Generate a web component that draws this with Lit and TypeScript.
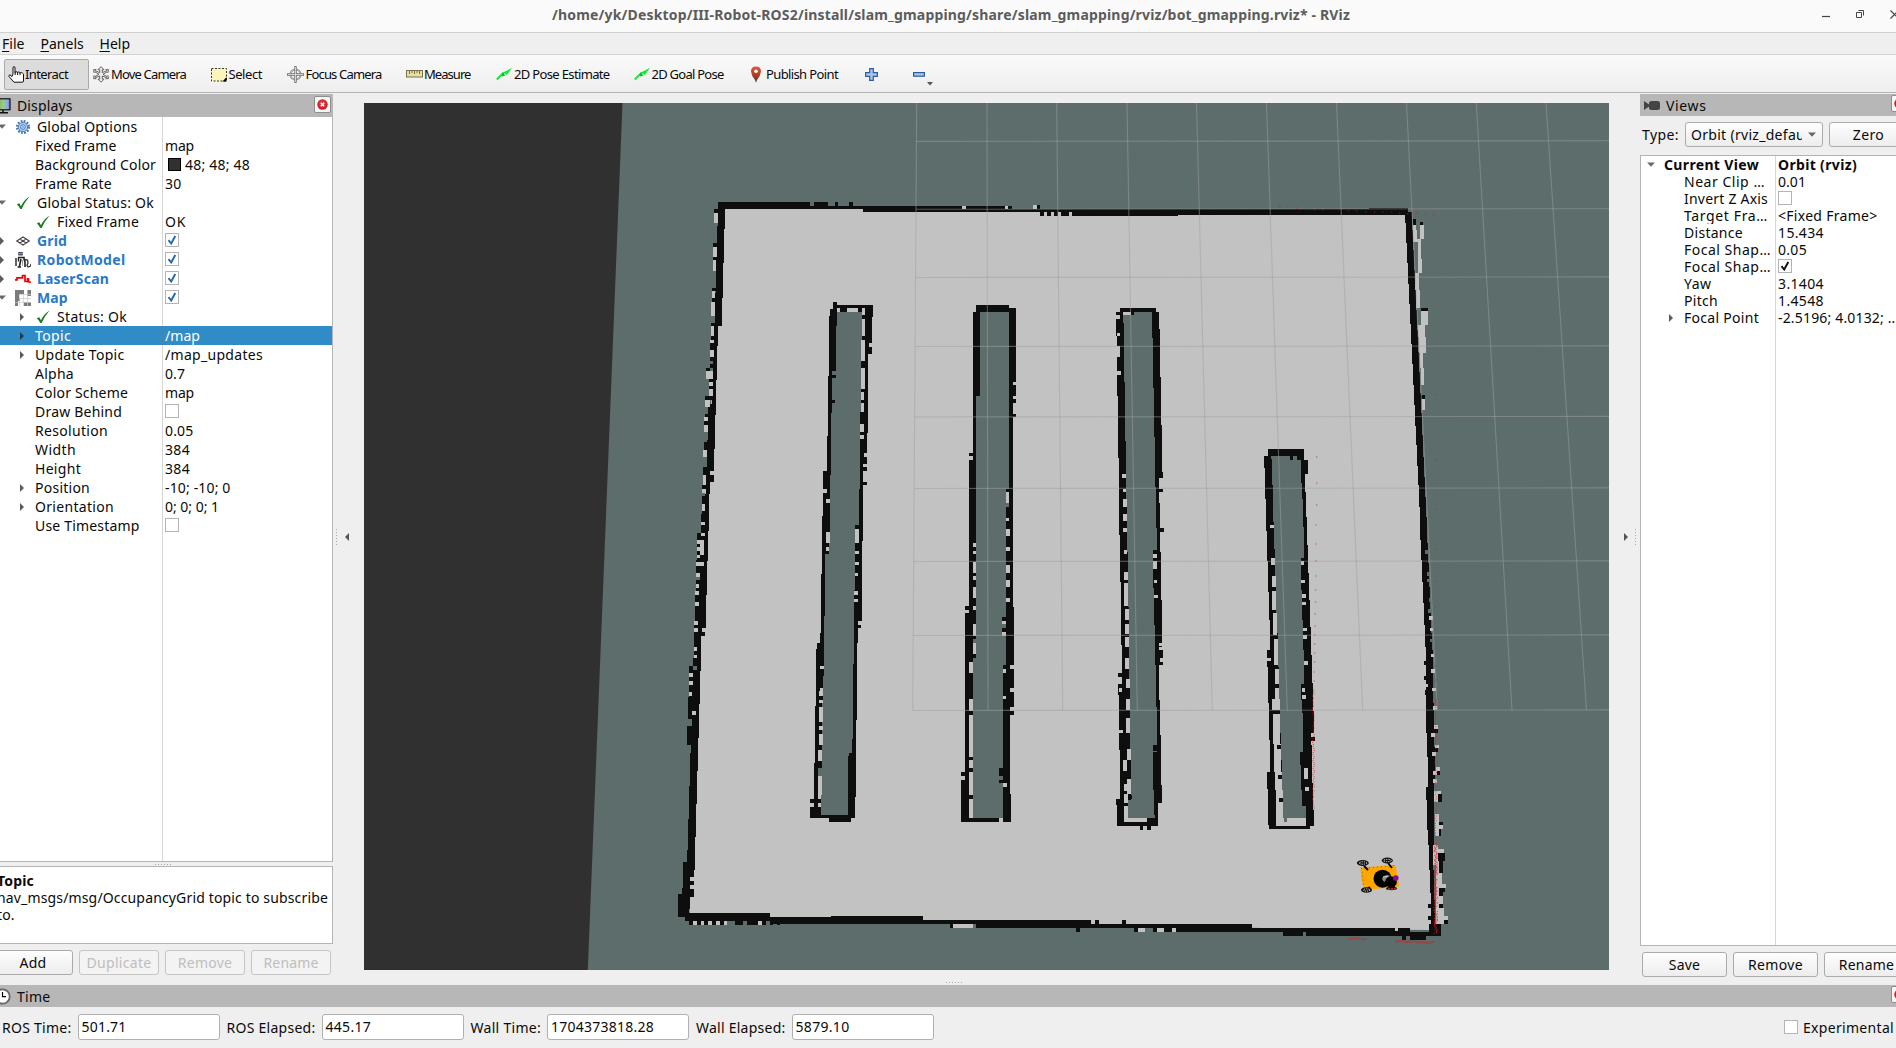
import { LitElement, html, svg, css, nothing, type TemplateResult } from "lit";
import { customElement, property } from "lit/decorators.js";
import { classMap } from "lit/directives/class-map.js";

/* ---------- text label that spreads its letters over a given width ---------- */
@customElement("fit-text")
export class FitText extends LitElement {
  static styles = css`
    :host { display: inline-block; white-space: pre; }
  `;
  @property() text = "";
  @property({ type: Number }) w = 0;
  render() {
    return html`<span>${this.text}</span>`;
  }
  updated() {
    if (!this.w) return;
    const span = this.renderRoot.querySelector("span") as HTMLElement;
    this.style.letterSpacing = "0px";
    const natural = span.getBoundingClientRect().width;
    this.style.letterSpacing = `${(this.w - natural) / this.text.length}px`;
  }
}
const t = (text: string, w = 0) => html`<fit-text .text=${text} .w=${w}></fit-text>`;

/* ---------- icons ---------- */
const closeIcon = svg`<svg width="11" height="11" viewBox="0 0 11 11"><circle cx="5.5" cy="5.5" r="5.2" fill="#c81e26"/><circle cx="5.5" cy="4.6" r="3.8" fill="#e0444a" opacity=".6"/><path d="M3.8 3.8l3.4 3.4M7.2 3.8L3.8 7.2" stroke="#fff" stroke-width="1.5"/></svg>`;
const handIcon = svg`<svg width="17" height="17" viewBox="0 0 17 17"><path d="M5 8V1.8Q5 .6 6 .6T7 1.800V6.500Q7 5.600 8.200 5.600T9.400 6.800Q9.500 6 10.700 6T12 7.200Q12 6.500 13.200 6.600T15.500 8V15Q15.500 16.200 14 16.200H6L1 10.500Q.5 9 2 8.800L4 10.500Z" fill="#fff" stroke="#111" stroke-width="1"/><path d="M7.200 6v3M9.600 6.500v2.500M12 7v2.200" stroke="#111" stroke-width="1"/></svg>`;
const moveIcon = svg`<svg width="16" height="17" viewBox="0 0 16 17"><path d="M8 .7l3 3H9.300v3l4.500-2.200-1-.9 2.700.1-.6 3-.8-.9L10 8.300l4.100 2.300.8-1 .6 3-2.700.1 1-.9L9.300 10v3.200H11l-3 3-3-3h1.700V10l-4.500 1.800 1 .9-2.700-.1.600-3 .8 1L6 8.300 1.900 5.800l-.8.900-.6-3 2.700-.1-1 .9 4.500 2.200v-3H5z" fill="#eee" stroke="#555" stroke-width=".9"/></svg>`;
const selectIcon = svg`<svg width="16" height="15" viewBox="0 0 16 15"><rect x=".5" y="1.500" width="15" height="12.500" fill="#fbf5bb" stroke="#333" stroke-dasharray="2 1.500"/><path d="M15.500 10v4.500H11.500z" fill="#000"/></svg>`;
const focusIcon = svg`<svg width="17" height="17" viewBox="0 0 17 17"><circle cx="8.500" cy="8.500" r="5" fill="none" stroke="#888" stroke-width="2"/><circle cx="8.500" cy="8.500" r="5" fill="none" stroke="#ddd" stroke-width=".6"/><circle cx="8.500" cy="8.500" r="2" fill="none" stroke="#999" stroke-width="1"/><path d="M8.500 0v17M0 8.500h17" stroke="#777" stroke-width="2.400"/><path d="M8.500 1v15M1 8.500h15" stroke="#ddd" stroke-width=".9"/></svg>`;
const measureIcon = svg`<svg width="17" height="8" viewBox="0 0 17 8"><rect x=".5" y=".5" width="16" height="6.500" fill="#e6dfa6" stroke="#77704d"/><path d="M3.500 1v3M6 1v2M8.500 1v3M11 1v2M13.500 1v3" stroke="#77704d"/></svg>`;
const arrowIcon = svg`<svg width="17" height="14" viewBox="0 0 17 14"><path d="M.8 12.500l7-7" stroke="#1ee03c" stroke-width="1.900"/><path d="M16.200.8L10.800 8 7 5.500z" fill="#10ee30"/><path d="M6.500 5.800l3 2.800-3.500 1z" fill="#0cae28"/></svg>`;
const pinIcon = svg`<svg width="12" height="17" viewBox="0 0 12 17"><defs><linearGradient id="pin" x2="0" y2="1"><stop offset="0" stop-color="#e8563a"/><stop offset=".6" stop-color="#a03c22"/><stop offset="1" stop-color="#4c3a20"/></linearGradient></defs><path d="M6 .5Q11 .5 11 5.500 10.500 10 7 14L6 16.800 5 14Q1.500 10 1 5.500 1 .5 6 .5" fill="url(#pin)"/><circle cx="6" cy="5.200" r="1.800" fill="#fff"/></svg>`;
const plusIcon = svg`<svg width="13" height="13" viewBox="0 0 13 13"><path d="M4.700.6h3.600v4.100h4.100v3.600H8.300v4.100H4.700V8.300H.6V4.700h4.100z" fill="#a9c6ea" stroke="#2e5c9e" stroke-width="1.200"/></svg>`;
const minusIcon = svg`<svg width="12" height="5" viewBox="0 0 12 5"><rect x=".6" y=".6" width="10.800" height="3.600" fill="#a9c6ea" stroke="#2e5c9e" stroke-width="1.200"/></svg>`;
const monitorIcon = svg`<svg width="16" height="16" viewBox="0 0 16 16"><defs><linearGradient id="mon"><stop offset="0" stop-color="#e66"/><stop offset=".5" stop-color="#7ddc7d"/><stop offset=".8" stop-color="#99a8e8"/><stop offset="1" stop-color="#7b78dc"/></linearGradient></defs><rect x="1" y=".8" width="14" height="11" fill="url(#mon)" stroke="#111" stroke-width="1.200"/><path d="M8 12v2M4 14.800h9" stroke="#111" stroke-width="1.500"/></svg>`;
const cameraIcon = svg`<svg width="16" height="9" viewBox="0 0 16 9"><path d="M0 0l5 3.500V5.500L0 9z" fill="#444"/><rect x="5" y="0" width="11" height="9" rx="2.500" fill="#444"/></svg>`;
const clockIcon = svg`<svg width="17" height="17" viewBox="0 0 17 17"><circle cx="8.500" cy="8.500" r="7.200" fill="#fff" stroke="#666" stroke-width="1.800"/><path d="M8.500 4v4.700h3.500" fill="none" stroke="#000" stroke-width="1.200"/></svg>`;
const gearIcon = svg`<svg width="14" height="14" viewBox="0 0 14 14"><circle cx="7" cy="7" r="5.900" fill="none" stroke="#3f70b0" stroke-width="2.200" stroke-dasharray="1.750 1.340"/><circle cx="7" cy="7" r="4.700" fill="#a9c8ee" stroke="#4377b6" stroke-width=".9"/><circle cx="7" cy="7" r="2.300" fill="#cfe0f5" stroke="#4377b6" stroke-width=".9"/><circle cx="7" cy="7" r=".8" fill="#4377b6"/></svg>`;
const okIcon = svg`<svg width="14" height="14" viewBox="0 0 14 14"><path d="M.8 8.200l2.600-.9 1.500 3Q7.500 4.600 13.500.6 8.500 6.500 5.700 13H4.300Q2.600 9.800.8 8.200z" fill="#1e7b22"/></svg>`;
const gridIcon = svg`<svg width="14" height="10" viewBox="0 0 14 10"><path d="M.8 5L7 1l6.200 4L7 9zM3.900 3l6.200 4M10.100 3L3.900 7" fill="none" stroke="#444" stroke-width="1.100"/></svg>`;
const robotIcon = svg`<svg width="16" height="16" viewBox="0 0 16 16"><rect x="3" y="0" width="5" height="3.500" rx="1" fill="#444b58"/><rect x="3" y="1.200" width="5" height="1" fill="#8fa0e0"/><path d="M1 6v8M3.500 5.500v4M2.500 15h3.500" stroke="#222" stroke-width="1.400"/><path d="M3 5.500h6v1.500l1 3v5M6 7l-1 4.500-.5 3" fill="none" stroke="#222" stroke-width="1.600"/><path d="M7.500 8v5.500" stroke="#999" stroke-width="1"/><path d="M9.500 7.500l3 .5.500 3-1 2.500 1 1.500 2.500-1 .5-2" fill="none" stroke="#333" stroke-width="1.300"/></svg>`;
const laserIcon = svg`<svg width="16" height="10" viewBox="0 0 16 10"><path d="M0 5.800h2V3.800h5.500V1.500h2.500V7.500h2.500V4.800h1V8H16" fill="none" stroke="#f00000" stroke-width="1.700"/></svg>`;
const mapIcon = svg`<svg width="16" height="16" viewBox="0 0 16 16" shape-rendering="crispEdges"><rect width="16" height="16" fill="#fff"/><path d="M0 0h9v4H4v4h1v3H3v5H0zM12 0h4v6h-4zM9 12h7v4H9z" fill="#7b7b7b"/><path d="M4 4v12M8 4v12M12 0v16M4 8h12M0 12h16M4 4h12" stroke="#ccc" stroke-width=".7" fill="none"/></svg>`;

/* ---------- occupancy map ---------- */
type Pt = [number, number];
/** Outline of a vertical band with stepped sides; each entry gives x and the y it starts at. */
const band = (left: Pt[], right: Pt[], bottom: number) => {
  let d = `M${left[0][0]} ${left[0][1]}`;
  for (let i = 1; i < left.length; i++) d += `V${left[i][1]}H${left[i][0]}`;
  d += `V${bottom}H${right[right.length - 1][0]}`;
  for (let i = right.length - 1; i > 0; i--) d += `V${right[i][1]}H${right[i - 1][0]}`;
  return d + `V${right[0][1]}Z`;
};
/** Run of cells "x,y,w,h x,y,w,h ..." */
const cells = (s: string) =>
  s.trim().split(/\s+/).map((c) => {
    const [x, y, w, h] = c.split(",").map(Number);
    return `M${x} ${y}h${w}v${h}h${-w}z`;
  }).join("");
const p = (s: string): Pt[] => s.trim().split(/\s+/).map((q) => q.split("@").map(Number) as Pt);

interface Sector { x: number; y: number; wall: string[]; unknown: string[]; wall2: string; free: string; gap: string; }

const sectors: Sector[] = [
  {
    x: 670, y: 180,
    wall: [
      cells("144,66,276,21 432,66,42,21 420,78,159,9 495,66,9,12 537,66,12,12 579,78,435,18 1014,78,12,18 1014,87,186,9 1101,75,9,12 1110,96,12,12 1131,96,12,12 1152,96,12,12 1173,96,27,12"),
      band(p("144@66 141@138 138@240 135@340 132@430 129@490 126@600 114@672 111@780 108@873 105@942"), p("165@66 162@147 159@248 156@353 144@437 141@498 138@600 135@705 132@807 120@873 117@942"), 1052),
      band(p("489@366 480@387 477@408 474@588 471@768 459@873 456@1008"), p("501@366 609@375 606@411 594@522 591@758 579@873"), 1052),
      band(p("918@375 909@396 897@840"), p("1017@375 1038@384 1029@669"), 1052),
    ],
    unknown: [
      band(p("501@396 498@437 486@573 483@698 480@885"), p("576@396 573@480 570@696 567@927"), 1052),
      band(p("930@396 918@648"), p("1017@396 1008@970"), 1052),
    ],
    wall2: "132,87,12,12 129,189,12,12 129,231,12,9 126,324,12,9 126,354,9,12 123,429,12,9 123,468,10,12 120,489,12,21 120,531,12,12 120,552,10,12 108,564,12,9 117,597,12,9 117,618,12,9 105,648,21,12 105,702,9,9 102,723,12,12 102,786,12,24 99,861,12,24 96,915,12,12 96,948,12,24 93,1011,15,41 120,885,12,21 486,585,12,9 486,660,9,9 555,1035,12,15 579,906,12,9 897,819,12,9 1029,702,9,9 1008,927,10,9",
    free: "132,99,12,30 129,201,12,30 129,240,9,33 126,333,9,21 123,366,12,42 123,438,9,30 120,480,12,9 120,510,12,21 108,573,21,24 117,606,12,12 117,627,12,20 105,660,15,21 102,711,12,12 102,735,12,21 99,810,12,21 99,885,9,30 96,927,12,12 96,972,9,21 93,1026,12,9 120,873,12,12 876,78,12,9 1005,78,9,9 1089,75,12,12 576,384,9,20 576,417,9,51 573,480,12,63 573,564,12,63 573,636,9,24 573,669,9,27 570,732,12,24 570,765,12,12 501,384,9,12 531,384,33,12 597,489,9,12 582,819,9,12 579,852,12,9 468,960,12,9 459,885,1,1 459,927,12,12 1029,606,9,9 1029,648,9,9 1008,936,9,33 1008,1014,9,9 1122,96,9,12",
    gap: "486,573,12,12",
  },
  {
    x: 1050, y: 180,
    wall: [
      cells("0,87,384,21 384,87,691,18 957,85,117,6"),
      band(p("1065@96 1068@128 1071@190 1074@248 1077@311 1080@373 1083@432 1086@492 1089@551 1092@615 1095@675 1098@737 1101@795 1104@857 1107@915 1110@975"), p("1085@96 1089@150 1092@210 1095@270 1098@330 1101@390 1104@450 1107@515 1110@575 1113@640 1116@700 1119@765 1122@830 1125@890 1128@950 1131@1010"), 1052),
      band(p("210@384 198@396 201@468 204@648 207@834"), p("318@384 327@396 330@447 333@591 336@736 339@876 327@894 330@970"), 1052),
      band(p("654@807 642@828 645@864 648@957"), p("762@807 774@840 765@882 768@936 771@1017"), 1052),
    ],
    unknown: [
      band(p("219@396 222@430 225@606 228@783 231@960"), p("306@396 309@474 312@625 315@771 318@920"), 1052),
      band(p("663@828 666@837 669@915 672@1020"), p("753@828 753@840 756@909 759@990"), 1052),
    ],
    wall2: "1088,117,10,18 1110,126,9,9 1112,384,22,9 1113,645,12,12 243,396,9,9 327,927,12,9 330,1044,12,8 720,828,9,12 741,828,12,12",
    free: "3,96,9,12 24,96,9,12 57,96,9,12 1089,135,9,50 1097,150,4,35 1110,135,12,42 1101,177,12,9 1104,186,9,93 1111,236,5,43 1095,279,12,52 1098,331,12,53 1113,393,21,42 1104,435,21,36 1107,471,21,48 1110,519,9,45 1112,564,10,50 1116,657,10,33 219,396,24,9 198,405,12,12 201,459,9,9 201,498,9,33 201,573,12,12 216,882,12,12 219,927,9,9 219,957,12,24 219,1002,12,21 219,1044,12,6 660,1035,12,9",
    gap: "",
  },
  {
    x: 670, y: 500,
    wall: [
      band(p("96@-2 93@42 81@99 78@180 75@285 72@375 69@474 57@498 54@591 66@657 51@678 63@735 60@760 57@858 54@957 51@1050 39@1086 36@1164 24@1182"), p("117@-2 114@84 111@183 108@285 96@384 105@396 93@408 90@513 87@612 84@714 81@813 78@912 75@1011 72@1110 60@1191 57@1227"), 1251),
      cells("45,1240,255,23 300,1251,183,21 483,1248,276,24 759,1260,441,12 918,1260,284,24 57,1263,114,12 195,1263,24,12 231,1263,57,12 300,1263,9,12 321,1263,9,12 840,1272,9,12"),
      band(p("459@-2 456@48 453@222 450@400 441@429 438@447 435@618 432@789 420@897"), p("579@-2 576@123 573@363 564@384 561@429 558@660 555@891"), 954),
      cells("477,945,66,21 873,954,114,12 999,954,24,12"),
      band(p("897@-2 885@318 873@816"), p("1029@-2 1032@321 1020@645 1023@882"), 956),
    ],
    unknown: [
      band(p("480@-2 477@109 465@163 462@348 459@528 456@600 453@886"), p("567@-2 555@75 552@270 549@492 546@718 534@769"), 945),
      band(p("918@-2 909@474"), p("1008@-2 999@495"), 954),
    ],
    wall2: "537,760,10,12 996,351,12,12 996,384,12,12 987,804,12,24 987,840,12,9",
    free: "96,12,9,21 93,66,12,9 93,99,12,9 81,120,21,12 90,132,12,33 81,141,9,12 81,165,9,9 78,186,24,12 78,219,12,12 78,252,9,12 75,273,12,12 75,306,12,12 72,363,12,12 72,384,12,12 72,441,9,12 72,465,9,9 57,519,12,12 57,543,12,12 57,576,9,12 66,633,12,12 60,1131,12,12 60,1155,12,12 69,1263,12,12 93,1263,9,12 114,1263,12,12 138,1263,12,12 162,1263,9,12 264,1263,12,12 849,1272,60,12 468,-2,12,11 468,96,12,33 468,141,9,12 555,87,12,42 555,153,12,9 555,186,12,9 555,219,9,9 552,273,12,12 552,297,12,9 564,363,9,12 450,498,12,9 450,564,9,9 447,573,12,15 447,600,12,9 447,621,12,45 447,678,12,12 447,702,12,33 444,750,12,33 444,828,12,57 444,885,9,12 420,909,12,12 444,909,9,12 909,129,9,12 909,153,9,9 909,186,9,33 909,228,9,12 909,261,9,33 909,318,9,12 885,330,12,9 909,372,9,36 909,429,9,33 897,486,12,33 897,597,12,36 897,645,12,126 897,780,12,24 897,816,12,69 897,897,12,57 873,828,12,12 1008,-2,9,11 1008,54,9,9 1008,87,12,21 1008,141,12,12 1008,195,12,24 1008,240,12,21 1008,294,12,12 996,363,12,9 996,396,12,12 1020,495,12,12 1020,564,12,12 1020,621,12,12 999,507,9,12 999,588,9,9 999,849,12,12 987,954,12,12",
    gap: "78,231,12,9 69,498,12,12 444,804,12,24 909,417,9,12 1008,9,9,12",
  },
  {
    x: 1050, y: 500,
    wall: [
      cells("0,1260,123,24 135,1260,12,12 216,1260,12,12 0,1272,606,12 78,1284,12,12 253,1284,12,12 309,1284,12,12 342,1284,24,12 606,1284,429,12 699,1284,60,24 768,1284,289,24 1045,1284,35,24 1057,1308,12,12 1080,1296,48,24 1128,1296,44,12 1137,1272,35,30"),
      band(p("1107@-2 1110@20 1113@120 1116@180 1119@245 1122@310 1125@375 1128@440 1125@570 1128@585 1131@700 1134@770 1128@862 1131@900 1134@990 1137@1035 1140@1110 1143@1180 1137@1272"), p("1128@-2 1131@60 1134@130 1137@190 1140@260 1143@340 1146@400 1149@450 1152@610 1155@740 1152@840 1149@1035 1152@1110 1155@1200"), 1300),
      band(p("207@-2 210@105 213@245 216@435 204@519 207@585 210@750 198@897 201@915"), p("327@-2 330@90 333@155 336@300 339@450 327@495 330@600 333@705 336@855 324@909"), 978),
      cells("270,978,9,12 291,978,12,12 657,978,122,10"),
      band(p("648@-2 651@90 654@183 657@275 660@360 651@450 654@500 657@610 660@720 651@816 654@868 657@975"), p("768@-2 771@50 774@135 777@220 780@300 783@380 786@465 789@548 792@632 783@700 786@735 789@850 792@930"), 978),
    ],
    unknown: [
      band(p("231@-2 234@157 237@320 240@537 243@747 234@900"), p("318@-2 321@84 309@150 312@265 315@375 318@495 321@620 309@755 312@870 315@945"), 954),
      band(p("669@-2 672@67 675@147 678@240 681@340 684@400 687@500 690@600 693@700 696@780 699@880"), p("759@-2 762@80 753@175 756@270 759@360 762@450 753@552 756@600 759@640 750@755 753@795 756@870 768@918"), 954),
    ],
    wall2: "1122,483,12,12 1122,528,12,12 1152,687,12,12 1155,744,9,12 1158,813,12,12 1164,882,12,24 1167,966,12,9 1161,987,12,22 1164,1059,21,24 1167,1083,12,36 1164,1164,21,12 1167,1176,12,12 1167,1212,12,12 1182,1260,12,12 1134,1212,12,12 1134,1248,12,12 330,84,12,12 309,735,12,18 231,885,14,12",
    free: "1137,348,12,12 1140,384,9,9 1143,462,9,9 1143,507,12,12 1146,564,12,9 1125,552,10,9 1149,618,12,12 1152,675,12,12 1143,699,12,12 1155,735,12,9 1146,756,12,12 1158,801,12,12 1149,813,12,12 1149,837,12,12 1152,873,12,33 1164,873,9,9 1155,942,12,66 1167,975,12,12 1149,1035,15,60 1160,1047,22,12 1158,1083,9,190 1167,1119,9,45 1167,1152,21,12 1167,1188,12,24 1167,1224,14,48 1181,1248,13,12 123,1260,12,12 265,1284,20,12 321,1284,21,12 366,1284,12,12 1035,1284,10,10 219,-2,12,23 219,42,12,21 219,84,12,12 222,150,9,12 222,216,12,24 222,249,12,69 225,327,12,33 225,372,12,30 225,411,12,30 225,474,12,33 228,537,12,27 204,531,12,21 207,564,9,12 228,597,12,33 228,654,12,45 207,690,12,9 231,747,12,33 219,780,12,33 231,838,12,45 222,852,12,21 222,883,12,25 222,918,12,40 222,954,69,12 309,162,12,12 309,183,12,24 312,240,9,9 312,285,12,9 327,430,9,9 327,441,9,9 330,474,9,12 660,75,12,9 663,174,12,21 666,228,12,33 666,273,12,57 669,339,12,66 672,417,12,78 675,507,12,45 651,474,12,9 675,564,12,33 666,597,24,33 669,642,22,90 672,732,21,84 675,816,22,54 678,870,21,108 699,954,69,24 753,183,9,12 753,240,12,9 756,282,12,12 756,306,12,9 759,384,12,9 759,405,12,12 762,483,12,12 756,564,9,12 756,585,12,12 762,804,12,33 765,861,12,12",
    gap: "1125,150,12,12 1131,216,9,12 1131,237,12,9 1137,294,9,12 1134,327,12,12 1140,417,9,9 702,954,9,12",
  },
];

const lateWall = "378,1272,228,24 681,735,12,12 684,825,12,12 687,894,12,12 783,711,12,12";

const gridX: Pt[] = [[916.7, 912.7], [987, 988], [1056.7, 1062.7], [1127, 1137.3], [1196.5, 1212.3], [1266.5, 1287.3], [1336.5, 1362.7], [1406.5, 1437.3], [1476.3, 1512], [1546, 1586.5]];
const gridY = [141.4, 209.3, 277.5, 346.5, 417, 488.5, 561.5, 635.5, 710.5];

/** Deterministic scatter of scan hits along a segment. */
const scan = (x0: number, y0: number, x1: number, y1: number, n: number, spread: number) => {
  let d = "", seed = 7;
  for (let i = 0; i < n; i++) {
    seed = (seed * 1103 + 377) % 9973;
    const k = i / n, r = (seed / 9973 - 0.5) * spread;
    const steep = Math.abs(y1 - y0) > Math.abs(x1 - x0);
    const x = x0 + (x1 - x0) * k + (steep ? r : 0), y = y0 + (y1 - y0) * k + (steep ? 0 : r);
    d += `M${x.toFixed(1)} ${y.toFixed(1)}h1`;
  }
  return d;
};
const scans = scan(1435.2, 845, 1435.2, 934, 150, 3.5) + scan(1435.2, 700, 1435.2, 845, 60, 1.5) + scan(1312.7, 690, 1313, 811, 60, 2)
  + scan(1395, 941, 1434, 942.5, 55, 2.5) + scan(1348, 938.5, 1367, 939, 18, 1.5);
const hits: Pt[] = [[1316, 457], [1316, 483], [1316, 505], [1315.5, 525], [1315.5, 544], [1315.5, 561], [1315, 576], [1315, 590], [1315, 602], [1314.5, 614], [1314.5, 626], [1314, 635], [1314, 644], [1314, 653], [1314, 662], [1313.5, 672], [1313.5, 681],
  [1435, 304], [1435, 395], [1435, 460], [1435, 509], [1435, 549], [1435, 581], [1435, 607], [1435, 629], [1435, 648], [1435, 666], [1435, 680],
  [1279, 207], [1287, 207], [1296, 208], [1305, 209], [1314, 210], [1322, 210], [1331, 209], [1340, 210], [1348, 211], [1356, 211], [1365, 212], [1374, 212], [1382, 212], [1391, 212], [1399, 213], [1407, 214], [1416, 213], [1425, 214], [1433, 214.5]];

const sceneView = svg`
<svg class="scene" width="1245" height="867" viewBox="364 103 1245 867">
  <rect x="364" y="103" width="1245" height="867" fill="#303030"/>
  <path d="M622.500 103H1609V970H587.800Z" fill="#5d6d6b"/>
  <path d="M721 205L863 209 1020 211 1408 213 1420 420 1425 560 1431 720 1433 930 1300 929 1140 925 920 922 690 917 688 880 692 800 696 660 702 540 712 390Z" fill="#c2c2c2"/>
  <g shape-rendering="crispEdges">
    ${sectors.map((s) => svg`<g transform="translate(${s.x} ${s.y}) scale(.333333)">
      ${s.wall.map((d) => svg`<path d=${d} fill="#0e0e0e"/>`)}
      ${s.unknown.map((d) => svg`<path d=${d} fill="#5d6d6b"/>`)}
      <path d=${cells(s.wall2)} fill="#0e0e0e"/>
      <path d=${cells(s.free)} fill="#c2c2c2"/>
      ${s.gap ? svg`<path d=${cells(s.gap)} fill="#5d6d6b"/>` : nothing}
    </g>`)}
    <path transform="translate(1050 500) scale(.333333)" d=${cells(lateWall)} fill="#0e0e0e"/>
  </g>
  <g stroke="#a0a0a4" stroke-opacity=".5" stroke-width="1.1">
    ${gridX.map(([a, b]) => svg`<line x1=${a} y1="103" x2=${b} y2="710.5"/>`)}
    ${gridY.map((y, i) => svg`<line x1=${916.5 - i * 0.45} y1=${y} x2="1609" y2=${y - 0.6}/>`)}
  </g>
  <path d=${scans} stroke="#e01818" stroke-opacity=".75" stroke-width="1"/>
  <path d=${hits.map(([x, y]) => `M${x} ${y}h1.3`).join("")} stroke="#d01818" stroke-opacity=".7" stroke-width="1"/>
  <g class="robot">
    <path d="M1360.500 867.500L1395.500 865 1399 885 1398.500 886.500 1365 890 1361.500 880Z" fill="#ffa500"/>
    <path d="M1361 868.500L1395 865.500M1364 888.500L1362 872" stroke="#6b4a08" stroke-width=".8" stroke-dasharray="1 3" fill="none"/>
    <path d="M1364 866l4 4M1388 863l4 5M1366 890l4-3M1391 889l4-2" stroke="#000" stroke-width="2"/>
    <g fill="#111"><ellipse cx="1362.800" cy="863" rx="6" ry="2.900"/><ellipse cx="1387.300" cy="860.500" rx="5.600" ry="2.900"/><ellipse cx="1366.500" cy="890" rx="5.500" ry="2.800"/><ellipse cx="1391.500" cy="888.500" rx="5.500" ry="1.700"/></g>
    <g fill="none" stroke="#ddd" stroke-width="1" stroke-dasharray="1.200 1"><ellipse cx="1363" cy="863" rx="3.800" ry="1.200"/><ellipse cx="1387.500" cy="860.500" rx="3.800" ry="1.200"/><ellipse cx="1366.500" cy="890" rx="3.500" ry="1.100"/></g>
    <circle cx="1382.500" cy="878.700" r="9" fill="#000"/>
    <path d="M1382 879Q1383 874 1390 875.500L1387 880 1384 882Z" fill="#888"/><path d="M1383 877l5-1" stroke="#ccc"/>
    <circle cx="1391" cy="882" r="5.800" fill="#000"/>
    <circle cx="1395.800" cy="878" r="2.800" fill="#8b0a93"/>
    <path d="M1388 889h8" stroke="#b3231c" stroke-width="1.800" stroke-dasharray="2 1"/>
  </g>
</svg>`;

/* ---------- property trees ---------- */
type Check = "on" | "off";
interface Row {
  name: string; w: number; pad: number;
  arrow?: "open" | "closed"; arrowX?: number;
  icon?: TemplateResult; iconX?: number; bold?: boolean; blue?: boolean;
  value?: string; vw?: number; check?: Check; swatch?: boolean; selected?: boolean;
}

const displayRows: Row[] = [
  { name: "Global Options", w: 100.5, pad: 37, arrow: "open", arrowX: -2, icon: gearIcon, iconX: 16 },
  { name: "Fixed Frame", w: 81.5, pad: 35, value: "map", vw: 29 },
  { name: "Background Color", w: 121, pad: 35, value: "48; 48; 48", vw: 65, swatch: true },
  { name: "Frame Rate", w: 77, pad: 35, value: "30", vw: 16.5 },
  { name: "Global Status: Ok", w: 117, pad: 37, arrow: "open", arrowX: -2, icon: okIcon, iconX: 16 },
  { name: "Fixed Frame", w: 82, pad: 57, icon: okIcon, iconX: 36, value: "OK", vw: 21 },
  { name: "Grid", w: 30, pad: 37, arrow: "closed", arrowX: 0, icon: gridIcon, iconX: 16, bold: true, blue: true, check: "on" },
  { name: "RobotModel", w: 88.5, pad: 37, arrow: "closed", arrowX: 0, icon: robotIcon, iconX: 15, bold: true, blue: true, check: "on" },
  { name: "LaserScan", w: 72, pad: 37, arrow: "closed", arrowX: 0, icon: laserIcon, iconX: 15, bold: true, blue: true, check: "on" },
  { name: "Map", w: 30.5, pad: 37, arrow: "open", arrowX: -2, icon: mapIcon, iconX: 15, bold: true, blue: true, check: "on" },
  { name: "Status: Ok", w: 70, pad: 57, arrow: "closed", arrowX: 20, icon: okIcon, iconX: 36 },
  { name: "Topic", w: 36, pad: 35, arrow: "closed", arrowX: 20, value: "/map", vw: 35, selected: true },
  { name: "Update Topic", w: 89.5, pad: 35, arrow: "closed", arrowX: 20, value: "/map_updates", vw: 98 },
  { name: "Alpha", w: 39, pad: 35, value: "0.7", vw: 20 },
  { name: "Color Scheme", w: 93, pad: 35, value: "map", vw: 29 },
  { name: "Draw Behind", w: 87, pad: 35, check: "off" },
  { name: "Resolution", w: 73, pad: 35, value: "0.05", vw: 28.5 },
  { name: "Width", w: 41, pad: 35, value: "384", vw: 25 },
  { name: "Height", w: 46, pad: 35, value: "384", vw: 25 },
  { name: "Position", w: 55, pad: 35, arrow: "closed", arrowX: 20, value: "-10; -10; 0", vw: 65.5 },
  { name: "Orientation", w: 79, pad: 35, arrow: "closed", arrowX: 20, value: "0; 0; 0; 1", vw: 54 },
  { name: "Use Timestamp", w: 104.5, pad: 35, check: "off" },
];

const viewRows: Row[] = [
  { name: "Current View", w: 95, pad: 23, arrow: "open", arrowX: 6, bold: true, value: "Orbit (rviz)", vw: 79 },
  { name: "Near Clip …", w: 81, pad: 43, value: "0.01", vw: 28 },
  { name: "Invert Z Axis", w: 84, pad: 43, check: "off" },
  { name: "Target Fra…", w: 84, pad: 43, value: "<Fixed Frame>", vw: 99.5 },
  { name: "Distance", w: 59, pad: 43, value: "15.434", vw: 46 },
  { name: "Focal Shap…", w: 87, pad: 43, value: "0.05", vw: 29 },
  { name: "Focal Shap…", w: 87, pad: 43, check: "on" },
  { name: "Yaw", w: 27.5, pad: 43, value: "3.1404", vw: 46 },
  { name: "Pitch", w: 34, pad: 43, value: "1.4548", vw: 46 },
  { name: "Focal Point", w: 75, pad: 43, arrow: "closed", arrowX: 28, value: "-2.5196; 4.0132; …", vw: 121 },
];

@customElement("property-tree")
export class PropertyTree extends LitElement {
  @property({ attribute: false }) rows: Row[] = [];
  @property({ type: Boolean, reflect: true }) compact = false;
  static styles = css`
    :host { display: grid; grid-template-columns: 162px 1fr; align-content: start; background: linear-gradient(90deg, #fff 162px, #d6d6d6 162px 163px, #fff 163px); overflow: hidden; --rh: 19px; }
    :host([compact]) { grid-template-columns: 134px 1fr; background: linear-gradient(90deg, #fff 134px, #d6d6d6 134px 135px, #fff 135px); --rh: 17px; }
    .name, .value { position: relative; height: var(--rh); line-height: var(--rh); white-space: pre; display: flex; align-items: center; overflow: hidden; }
    .value { padding-left: 3px; }
    .sel { background: #308cc6; color: #fff; }
    .value.sel { border-left: 1px solid #4583ad; padding-left: 2px; }
    .bold { font-weight: 700; }
    .blue { color: #2a78c8; }
    .slot { position: absolute; top: 0; height: 100%; display: flex; align-items: center; }
    .box { width: 12px; height: 12px; border: 1px solid #b4b4b4; background: #fff; display: flex; align-items: center; justify-content: center; color: #2568a8; margin-top: -1px; }
    :host([compact]) .box { color: #111; }
    .swatch { width: 11px; height: 11px; border: 1px solid #000; background: #303030; margin: 0 4px 0 3px; }
    fit-text { flex: none; }
  `;
  private arrow(r: Row) {
    const fill = r.selected ? "#1c3a50" : "#5c5c5c";
    return html`<span class="slot" style="left:${r.arrowX}px">${r.arrow === "open"
      ? svg`<svg width="8" height="5" viewBox="0 0 8 5"><path d="M0 .5h8L4 4.700z" fill="#6a6a6a"/></svg>`
      : svg`<svg width="4" height="8" viewBox="0 0 4 8"><path d="M0 0v8L4 4z" fill=${fill}/></svg>`}</span>`;
  }
  render() {
    return this.rows.map((r) => {
      const c = { bold: !!r.bold, sel: !!r.selected };
      return html`
        <div class=${classMap({ name: true, blue: !!r.blue, ...c })} style="padding-left:${r.pad}px">
          ${r.arrow ? this.arrow(r) : nothing}
          ${r.icon ? html`<span class="slot" style="left:${r.iconX}px">${r.icon}</span>` : nothing}${t(r.name, r.w)}
        </div>
        <div class=${classMap({ value: true, ...c })}>${r.swatch ? html`<span class="swatch"></span>` : nothing}${r.check
          ? html`<span class="box">${r.check === "on" ? svg`<svg width="10" height="10" viewBox="0 0 10 10"><path d="M1.500 5.200l2.700 3.300L8.300 1" fill="none" stroke="currentColor" stroke-width="1.900"/></svg>` : nothing}</span>`
          : nothing}${r.value ? t(r.value, r.vw) : nothing}</div>`;
    });
  }
}

/* ---------- window ---------- */
@customElement("app-root")
export class AppRoot extends LitElement {
  static styles = css`
    :host { display: flex; flex-direction: column; width: 1896px; height: 1048px; overflow: hidden; background: #efefef; color: #0a0a0a; font: 14px/17px "Noto Sans", "Open Sans", sans-serif; }
    * { box-sizing: border-box; }
    svg { display: block; flex: none; }
    fit-text { flex: none; }
    .titlebar { height: 33px; flex: none; background: #fafafa; border-bottom: 1px solid #cfcfcf; display: flex; align-items: center; padding: 0 0 4px 552px; font-weight: 700; font-size: 14px; color: #5c5c5c; }
    .wm { display: flex; margin-left: 472px; align-items: center; color: #444; }
    .wm svg { margin-right: 26px; }
    .menubar { height: 22px; flex: none; background: #efefef; border-bottom: 1px solid #d2d2d2; display: flex; align-items: center; padding-left: 2px; }
    .menu { height: 19px; display: flex; align-items: center; }
    .menu u { text-decoration: underline; text-underline-offset: 2px; text-decoration-thickness: 1px; }
    .toolbar { height: 38px; flex: none; background: linear-gradient(#fafafa, #eeeeee); border-bottom: 1px solid #b4b4b4; display: flex; align-items: center; font-size: 13px; padding-top: 1px; }
    .tool { height: 31px; display: flex; align-items: center; flex: none; }
    .icn { width: 18px; flex: none; display: flex; }
    .interact { width: 85px; margin-left: 4px; padding-left: 3px; background: #dcdcdc; border: 1px solid #a9a9a9; border-radius: 2px; }
    .interact .icn { width: 17px; }
    .drop { margin: 20px 0 0 1px; }
    .main { flex: 1; display: flex; min-height: 0; padding-top: 1px; }
    .left { width: 333px; flex: none; display: flex; flex-direction: column; }
    .head { height: 23px; flex: none; background: #b7b7b7; display: flex; align-items: center; }
    .x { width: 17px; height: 17px; border: 1px solid #8d8d8d; border-radius: 2px; background: #f7f7f7; display: flex; align-items: center; justify-content: center; flex: none; margin-left: auto; }
    .head .x { margin-right: 2px; margin-bottom: 3px; }
    .left property-tree { height: 745px; flex: none; border-right: 1px solid #b4b4b4; border-bottom: 1px solid #b4b4b4; }
    .dots { height: 4px; flex: none; display: flex; padding-left: 155px; align-items: center; }
    .dots i { width: 17px; height: 1px; background: repeating-linear-gradient(90deg, #aaa 0 1px, transparent 1px 3px); }
    .desc { height: 78px; flex: none; border: 1px solid #b4b4b4; border-left: 0; background: #fff; padding: 5px 0 0 0; }
    .desc div { margin-left: -3px; height: 17px; white-space: nowrap; }
    .b { font-weight: 700; }
    .btns { display: flex; gap: 6px; padding-top: 6px; }
    .btn { height: 25px; width: 80px; flex: none; border: 1px solid #ababab; border-radius: 3px; background: linear-gradient(#fefefe, #ededed); display: flex; align-items: center; justify-content: center; }
    .off { color: #bebebe; border-color: #c6c6c6; background: #f3f3f3; }
    .add { margin-left: -7px; }
    .side { flex: none; display: flex; align-items: center; padding-bottom: 5px; }
    .sideL { width: 31px; padding-left: 3px; }
    .sideR { width: 31px; padding-left: 15px; }
    .vdots { width: 1px; height: 17px; background: repeating-linear-gradient(#aaa 0 1px, transparent 1px 3px); }
    .center { width: 1245px; flex: none; padding-top: 9px; display: flex; flex-direction: column; }
    .center .dots { height: 13px; padding-left: 582px; align-items: flex-end; }
    .right { width: 256px; flex: none; display: flex; flex-direction: column; }
    .right .head { height: 22px; padding-left: 4px; }
    .right .head .x, .time .x { margin-right: -12px; }
    .type { display: flex; padding: 6px 0 8px 2px; height: 39px; align-items: center; flex: none; }
    .combo { width: 138px; margin-left: 6px; justify-content: flex-start; padding-left: 5px; }
    .clip { width: 111px; flex: none; overflow: hidden; display: flex; margin-right: 6px; }
    .zero { width: 85px; margin-left: 6px; padding-right: 6px; }
    .right property-tree { height: 791px; flex: none; width: 258px; border: 1px solid #b4b4b4; border-right: 0; }
    .right .btns { padding: 6px 0 0 2px; }
    .right .btn { width: 85px; }
    .right .combo { width: 138px; }
    .time { height: 63px; flex: none; display: flex; flex-direction: column; }
    .time .head { height: 22px; overflow: hidden; }
    .fields { display: flex; align-items: center; height: 41px; padding: 0 0 1px 2px; }
    .field { width: 142px; height: 26px; border: 1px solid #b0b0b0; border-radius: 3px; background: #fff; flex: none; display: flex; align-items: center; padding: 0 0 2px 3px; margin: 0 7px 0 6px; }
    .cb { width: 14px; height: 14px; border: 1px solid #b4b4b4; background: #fff; flex: none; margin: 0 5px 0 auto; }
    .exp { margin-right: 2px; }
  `;

  private menu(m: string, w: number, gap: number) {
    return html`<span class="menu" style="width:${w + gap}px"><span><u>${m[0]}</u>${m.slice(1)}</span></span>`;
  }
  private tool(icon: TemplateResult, label: string, w: number, x: number, iw = 18) {
    return html`<div class="tool" style="margin-left:${x}px"><span class="icn" style="width:${iw}px">${icon}</span>${t(label, w)}</div>`;
  }
  private field(label: string, lw: number, value: string, vw: number) {
    return html`${t(label, lw)}<div class="field">${t(value, vw)}</div>`;
  }

  render() {
    return html`
      <div class="titlebar">
        ${t("/home/yk/Desktop/III-Robot-ROS2/install/slam_gmapping/share/slam_gmapping/rviz/bot_gmapping.rviz* - RViz", 798)}
        <div class="wm">
          <svg width="8" height="9" viewBox="0 0 8 9"><path d="M0 6.500h8" stroke="#444" stroke-width="1.200"/></svg>
          <svg width="8" height="9" viewBox="0 0 8 9"><path d="M.5 2.500h5v5h-5zM2.500 .5h5v5" fill="none" stroke="#444"/></svg>
          <svg width="9" height="9" viewBox="0 0 9 9"><path d="M.5.5l8 8M8.500.5l-8 8" stroke="#444" stroke-width="1.200"/></svg>
        </div>
      </div>
      <div class="menubar">${this.menu("File", 24, 14.5)}${this.menu("Panels", 44, 15)}${this.menu("Help", 31, 10)}</div>
      <div class="toolbar">
        <div class="tool interact"><span class="icn">${handIcon}</span>${t("Interact", 43)}</div>
        ${this.tool(moveIcon, "Move Camera", 75, 4)}
        ${this.tool(selectIcon, "Select", 33.5, 24.5)}
        ${this.tool(focusIcon, "Focus Camera", 76, 25, 18.5)}
        ${this.tool(measureIcon, "Measure", 46.5, 24.5, 18)}
        ${this.tool(arrowIcon, "2D Pose Estimate", 95.5, 25.5, 18)}
        ${this.tool(arrowIcon, "2D Goal Pose", 72, 24)}
        ${this.tool(pinIcon, "Publish Point", 72, 26.5, 16)}
        ${this.tool(plusIcon, "", 0, 27, 13)}
        ${this.tool(minusIcon, "", 0, 35, 12)}
        <svg class="drop" width="8" height="4" viewBox="0 0 8 4"><path d="M1 0h6L4 3.500z" fill="#555"/></svg>
      </div>
      <div class="main">
        <div class="left">
          <div class="head"><span style="margin-left:-5px">${monitorIcon}</span><span style="margin-left:6px">${t("Displays", 55.5)}</span><span class="x">${closeIcon}</span></div>
          <property-tree .rows=${displayRows}></property-tree>
          <div class="dots"><i></i></div>
          <div class="desc"><div class="b">${t("Topic", 37)}</div><div>${t("nav_msgs/msg/OccupancyGrid topic to subscribe", 331)}</div><div>${t("to.", 17.5)}</div></div>
          <div class="btns">
            <div class="btn add">${t("Add", 27)}</div><div class="btn off">${t("Duplicate", 65)}</div><div class="btn off">${t("Remove", 54.5)}</div><div class="btn off">${t("Rename", 55)}</div>
          </div>
        </div>
        <div class="side sideL"><span class="vdots"></span><svg style="margin-left:8px" width="4" height="8" viewBox="0 0 4 8"><path d="M4 0v8L0 4z" fill="#555"/></svg></div>
        <div class="center">${sceneView}<div class="dots"><i></i></div></div>
        <div class="side sideR"><svg width="4" height="8" viewBox="0 0 4 8"><path d="M0 0v8L4 4z" fill="#555"/></svg><span class="vdots" style="margin-left:7px"></span></div>
        <div class="right">
          <div class="head">${cameraIcon}<span style="margin-left:6px">${t("Views", 40.5)}</span><span class="x">${closeIcon}</span></div>
          <div class="type">${t("Type:", 37)}
            <div class="btn combo"><span class="clip">${t("Orbit (rviz_defau", 114)}</span><svg width="8" height="5" viewBox="0 0 8 5"><path d="M0 .5h8L4 4.700z" fill="#666"/></svg></div>
            <div class="btn zero">${t("Zero", 31.5)}</div>
          </div>
          <property-tree compact .rows=${viewRows}></property-tree>
          <div class="btns"><div class="btn">${t("Save", 31.5)}</div><div class="btn">${t("Remove", 55)}</div><div class="btn">${t("Rename", 55.5)}</div></div>
        </div>
      </div>
      <div class="time">
        <div class="head"><span style="margin-left:-6px">${clockIcon}</span><span style="margin-left:6px">${t("Time", 33.5)}</span><span class="x">${closeIcon}</span></div>
        <div class="fields">
          ${this.field("ROS Time:", 69.5, "501.71", 45)}${this.field("ROS Elapsed:", 89, "445.17", 45.5)}${this.field("Wall Time:", 70.5, "1704373818.28", 103)}${this.field("Wall Elapsed:", 89.5, "5879.10", 54)}
          <span class="cb"></span><span class="exp">${t("Experimental", 91)}</span>
        </div>
      </div>
    `;
  }
}
